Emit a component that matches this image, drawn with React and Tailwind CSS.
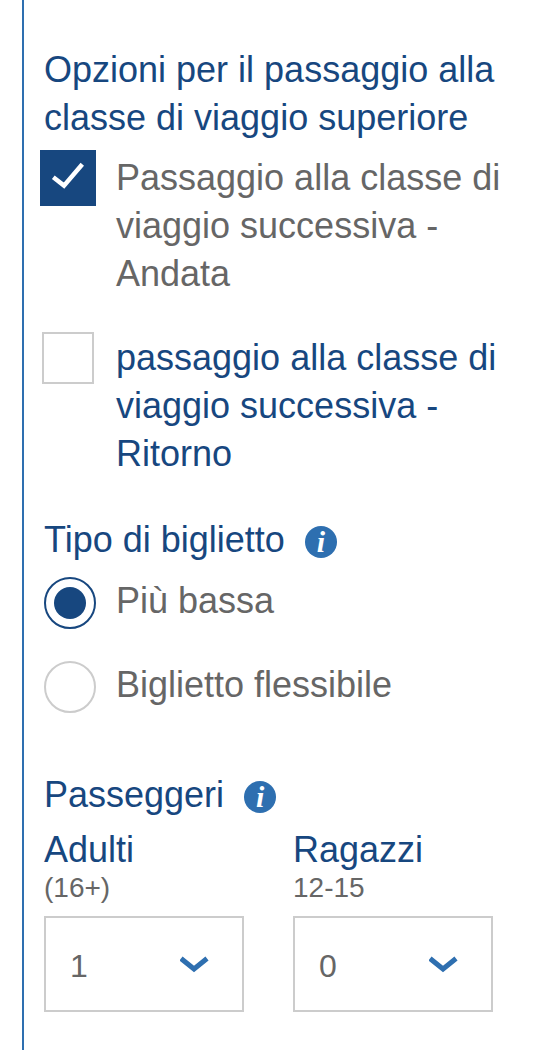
import { useState } from "react";

function InfoButton({ label }) {
  return (
    <button
      type="button"
      aria-label={label}
      className="flex size-8 items-center justify-center rounded-full bg-[#2e6fb0] font-['Liberation_Serif',serif] text-[30px] leading-8 font-bold text-white italic"
    >
      i
    </button>
  );
}

function CheckOption({ label, checked, onChange }) {
  return (
    <label
      className={
        checked
          ? "flex items-start gap-5 text-[#666666]"
          : "flex items-start gap-5 text-[#17477f]"
      }
    >
      <span className="-ml-1 grid size-14 shrink-0 place-items-center">
        <input
          type="checkbox"
          checked={checked}
          onChange={(e) => onChange(e.target.checked)}
          className="col-start-1 row-start-1 size-13 appearance-none border-2 border-[#cccccc] bg-white checked:size-14 checked:border-[#17477f] checked:bg-[#17477f]"
        />
        {checked && (
          <svg
            viewBox="0 0 56 56"
            className="pointer-events-none col-start-1 row-start-1 size-14"
            fill="none"
            stroke="white"
            strokeWidth="4.5"
            aria-hidden="true"
          >
            <path d="M13.3 27.3 L24 35.6 L42.3 14.3" />
          </svg>
        )}
      </span>
      <span className="pt-1">{label}</span>
    </label>
  );
}

function RadioOption({ label, value, selected, onChange }) {
  return (
    <label className="flex items-start gap-5 text-[#666666]">
      <span className="grid size-13 shrink-0 place-items-center">
        <input
          type="radio"
          name="ticket"
          value={value}
          checked={selected}
          onChange={() => onChange(value)}
          className="col-start-1 row-start-1 size-13 appearance-none rounded-full border-2 border-[#cccccc] bg-white checked:border-[#17477f]"
        />
        {selected && (
          <span className="pointer-events-none col-start-1 row-start-1 size-8 rounded-full bg-[#17477f]" />
        )}
      </span>
      <span>{label}</span>
    </label>
  );
}

function PassengerSelect({ id, label, ages, value, onChange }) {
  return (
    <div>
      <label htmlFor={id} className="block">
        <span className="block leading-[44px] text-[#17477f]">{label}</span>
        <span className="block text-[28px] leading-8 text-[#666666]">{ages}</span>
      </label>
      <div className="mt-3 grid items-center">
        <select
          id={id}
          value={value}
          onChange={(e) => onChange(e.target.value)}
          className="col-start-1 row-start-1 h-24 w-full appearance-none border-2 border-[#cccccc] bg-white pt-1 pl-6 text-[32px] text-[#666666]"
        >
          {["0", "1", "2", "3", "4", "5"].map((n) => (
            <option key={n}>{n}</option>
          ))}
        </select>
        <svg
          viewBox="0 0 32 20"
          className="pointer-events-none col-start-1 row-start-1 mr-8 h-5 w-8 justify-self-end"
          fill="none"
          stroke="#2e6fb0"
          strokeWidth="5"
          aria-hidden="true"
        >
          <path d="M1 4.5 L14 15 L27 4.5" />
        </svg>
      </div>
    </div>
  );
}

function App() {
  const [upgradeOut, setUpgradeOut] = useState(true);
  const [upgradeBack, setUpgradeBack] = useState(false);
  const [ticket, setTicket] = useState("lowest");
  const [adults, setAdults] = useState("1");
  const [teens, setTeens] = useState("0");

  return (
    <div className="min-h-screen bg-white pl-[22px] font-['Liberation_Sans',Arial,sans-serif] text-[36px] leading-[48px]">
      <form className="min-h-screen border-l-2 border-[#2e6fb0] pt-[46px] pr-10 pb-9 pl-5">
        <fieldset>
          <legend className="text-[#17477f]">
            Opzioni per il passaggio alla classe di viaggio superiore
          </legend>
          <div className="flex flex-col gap-8 pt-2">
            <CheckOption
              label="Passaggio alla classe di viaggio successiva - Andata"
              checked={upgradeOut}
              onChange={setUpgradeOut}
            />
            <CheckOption
              label="passaggio alla classe di viaggio successiva - Ritorno"
              checked={upgradeBack}
              onChange={setUpgradeBack}
            />
          </div>
        </fieldset>

        <fieldset className="mt-[38px]">
          <legend>
            <span className="flex items-end gap-5 text-[#17477f]">
              Tipo di biglietto
              <span className="pb-1.5">
                <InfoButton label="Informazioni sul tipo di biglietto" />
              </span>
            </span>
          </legend>
          <div className="flex flex-col gap-8 pt-[13px]">
            <RadioOption
              label="Più bassa"
              value="lowest"
              selected={ticket === "lowest"}
              onChange={setTicket}
            />
            <RadioOption
              label="Biglietto flessibile"
              value="flexible"
              selected={ticket === "flexible"}
              onChange={setTicket}
            />
          </div>
        </fieldset>

        <fieldset className="mt-[58px]">
          <legend>
            <span className="flex items-end gap-5 text-[#17477f]">
              Passeggeri
              <span className="pb-1.5">
                <InfoButton label="Informazioni sui passeggeri" />
              </span>
            </span>
          </legend>
          <div className="grid grid-cols-2 gap-[49px] pt-[9px] pr-[21px]">
            <PassengerSelect
              id="adults"
              label="Adulti"
              ages="(16+)"
              value={adults}
              onChange={setAdults}
            />
            <PassengerSelect
              id="teens"
              label="Ragazzi"
              ages="12-15"
              value={teens}
              onChange={setTeens}
            />
          </div>
        </fieldset>
      </form>
    </div>
  );
}

export default App;
